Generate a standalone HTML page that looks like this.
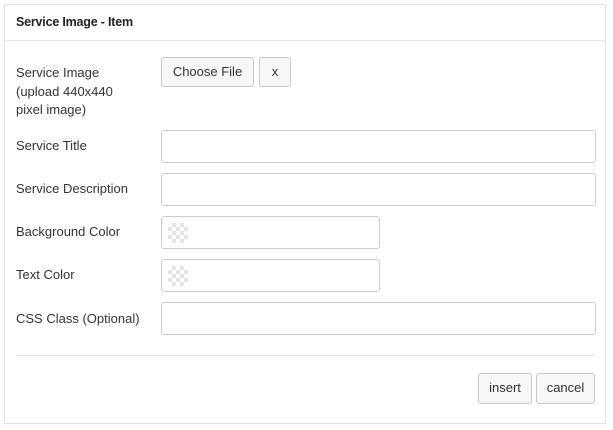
<!DOCTYPE html>
<html><head><style>
body{margin:0;background:#fff;font-family:"Liberation Sans",sans-serif;font-size:13px;color:#333;width:613px;height:430px;position:relative;overflow:hidden}
.box{position:absolute;left:4px;top:4px;width:602px;height:420px;border:1px solid #e2e2e2;box-sizing:border-box}
.hd{position:absolute;left:4px;top:40px;width:602px;border-top:1px solid #e6e6e6}
.t{position:absolute;left:16px;top:15px;font-size:12.5px;color:#222;font-weight:bold;letter-spacing:-0.2px}
.l{position:absolute;left:16px;line-height:18.5px}
.in{position:absolute;border:1px solid #ccc;border-radius:3px;box-sizing:border-box;background:#fff}
.btn{position:absolute;border:1px solid #c8c8c8;border-radius:3px;box-sizing:border-box;background:#f7f7f7;text-align:center;color:#333;line-height:28px}
.chk{position:absolute;left:6px;top:6px;width:20px;height:20px;
background-image:linear-gradient(45deg,#ddd 25%,transparent 25%,transparent 75%,#ddd 75%),linear-gradient(45deg,#ddd 25%,transparent 25%,transparent 75%,#ddd 75%);background-size:8px 8px;background-position:0 0,4px 4px;opacity:.8}
</style></head><body>
<div class="box"></div>
<div class="t">Service Image - Item</div>
<div class="hd"></div>
<div class="l" style="top:64px">Service Image<br>(upload 440x440<br>pixel image)</div>
<div class="btn" style="left:161px;top:57px;width:93px;height:30px">Choose File</div>
<div class="btn" style="left:259px;top:57px;width:32px;height:30px">x</div>
<div class="l" style="top:137px">Service Title</div>
<div class="in" style="left:161px;top:130px;width:435px;height:33px"></div>
<div class="l" style="top:180px">Service Description</div>
<div class="in" style="left:161px;top:173px;width:435px;height:33px"></div>
<div class="l" style="top:223px">Background Color</div>
<div class="in" style="left:161px;top:216px;width:219px;height:33px"><div class="chk"></div></div>
<div class="l" style="top:266px">Text Color</div>
<div class="in" style="left:161px;top:259px;width:219px;height:33px"><div class="chk"></div></div>
<div class="l" style="top:310px">CSS Class (Optional)</div>
<div class="in" style="left:161px;top:302px;width:435px;height:33px"></div>
<div style="position:absolute;left:16px;top:355px;width:579px;border-top:1px solid #e2e2e2"></div>
<div class="btn" style="left:478px;top:373px;width:54px;height:31px">insert</div>
<div class="btn" style="left:536px;top:373px;width:59px;height:31px">cancel</div>
</body></html>
